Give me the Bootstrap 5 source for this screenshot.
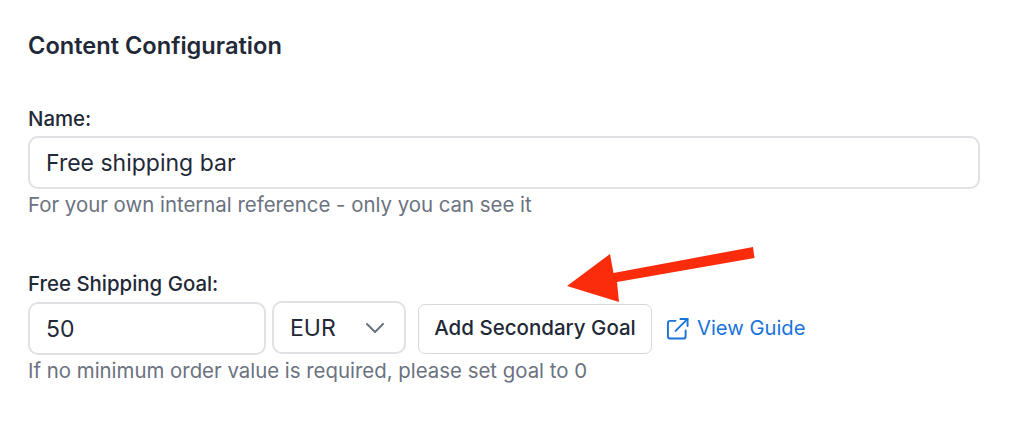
<!DOCTYPE html>
<html lang="en">
<head>
<meta charset="utf-8">
<title>Content Configuration</title>
<link rel="stylesheet" href="https://cdn.jsdelivr.net/npm/bootstrap@5.3.0/dist/css/bootstrap.min.css">
<style>
html, body { height: 100%; }
body { font-family: Inter, "Liberation Sans", sans-serif; color: #1f2937; background: #fff; }
.cfg-page { position: relative; width: 1014px; height: 424px; overflow: hidden; padding: 32px 34px 0 28px; }
.cfg-title { font-size: 23.6px; font-weight: 600; line-height: 28px; margin: 0 0 47px; color: #1f2937; }
.cfg-label { font-size: 20.4px; font-weight: 500; line-height: 24px; margin: 0 0 5px; color: #1f2937; }
.cfg-input.form-control, .cfg-input.form-select { font-size: 23px; line-height: 30px; color: #1f2937; border: 2px solid #dfe1e5; border-radius: 10px; height: 53px; padding: 0 16px; box-shadow: none; }
.cfg-name { width: 952px; }
.cfg-help { font-size: 20.4px; line-height: 24px; color: #6b7280; margin-top: 4px; }
.cfg-block { margin-bottom: 55px; }
.cfg-row { margin-top: 6px; }
.cfg-goal { width: 238px; flex: none; }
.cfg-cur.form-select { width: 134px; flex: none; margin: -2px 0 0 6px; padding-right: 30px; background-image: url("data:image/svg+xml,%3csvg xmlns='http://www.w3.org/2000/svg' viewBox='0 0 18 10'%3e%3cpath fill='none' stroke='%236b7280' stroke-width='2' stroke-linecap='round' stroke-linejoin='round' d='M1 1l8 8 8-8'/%3e%3c/svg%3e"); background-position: right 20px center; background-size: 18px 10px; }
.cfg-btn.btn { font-size: 20.5px; font-weight: 500; color: #1f2937; background: #fff; border: 1px solid #d6d8dc; border-radius: 7px; height: 50px; padding: 0 10px; width: 234px; margin-left: 12px; white-space: nowrap; }
.cfg-link { font-size: 20.2px; color: #1a73d9; text-decoration: none; gap: 8px; margin-left: 14px; }
.cfg-arrow { position: absolute; left: 560px; top: 240px; width: 200px; height: 70px; }
</style>
</head>
<body>
<div class="cfg-page">
  <h1 class="cfg-title">Content Configuration</h1>
  <div class="cfg-block">
    <label class="cfg-label d-block" for="nm">Name:</label>
    <input id="nm" class="form-control cfg-input cfg-name" type="text" value="Free shipping bar">
    <div class="cfg-help">For your own internal reference - only you can see it</div>
  </div>
  <div>
    <label class="cfg-label d-block mb-0" for="gl">Free Shipping Goal:</label>
    <div class="d-flex align-items-center cfg-row">
      <input id="gl" class="form-control cfg-input cfg-goal" type="text" value="50">
      <select class="form-select cfg-input cfg-cur" aria-label="Currency"><option>EUR</option></select>
      <button type="button" class="btn cfg-btn">Add Secondary Goal</button>
      <a href="#" class="cfg-link d-inline-flex align-items-center">
        <svg width="23" height="23" viewBox="0 0 24 24" fill="none" stroke="currentColor" stroke-width="2" stroke-linecap="round" stroke-linejoin="round" aria-hidden="true"><path d="M10 4H4.500A2.500 2.500 0 0 0 2 6.500V20a2.500 2.500 0 0 0 2.500 2.500H18a2.500 2.500 0 0 0 2.500-2.500v-6"/><path d="M15 2h7.500v7.500"/><path d="M22.500 2 10 14.500"/></svg>
        View Guide
      </a>
    </div>
    <div class="cfg-help">If no minimum order value is required, please set goal to 0</div>
  </div>
  <svg class="cfg-arrow" viewBox="560 240 200 70" aria-hidden="true"><polygon fill="#fb2c0c" points="567,286 610,254 613.500,273 753,247 754.500,258 617,282 619,302"/></svg>
</div>
<script src="https://cdn.jsdelivr.net/npm/bootstrap@5.3.0/dist/js/bootstrap.bundle.min.js"></script>
</body>
</html>
